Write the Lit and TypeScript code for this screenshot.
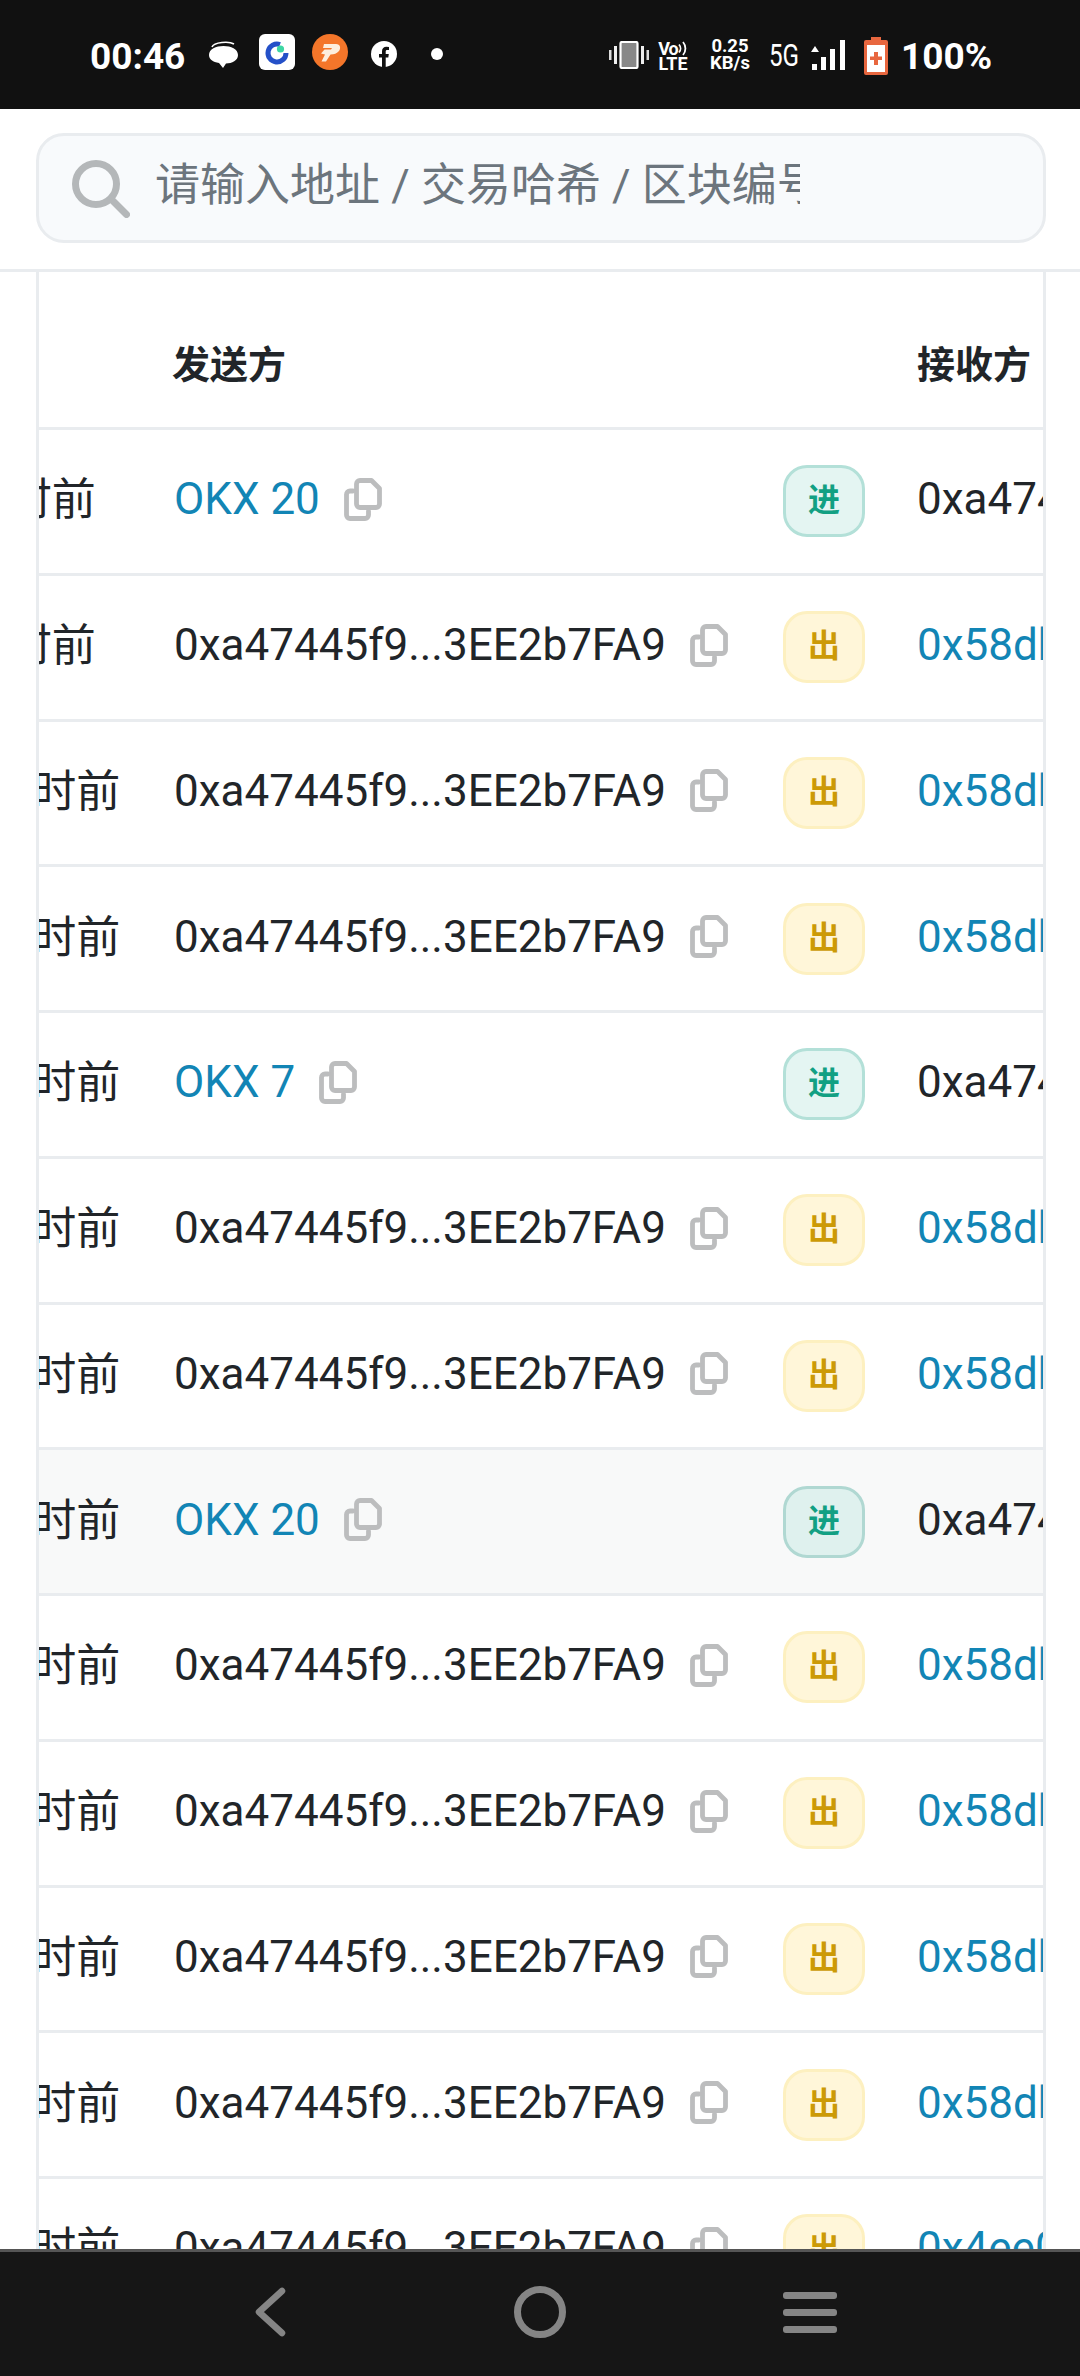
import { LitElement, html, css, svg } from "lit";
import { customElement } from "lit/decorators.js";

type Row = { age: string; from: string; fromLink?: boolean; dir: "in" | "out"; to: string; toLink?: boolean; hl?: boolean };
const ADDR = "0xa47445f9...3EE2b7FA9";
const inRow = (age: string, from: string, hl = false): Row => ({ age, from, fromLink: true, dir: "in", to: "0xa47445f9...3EE2b7FA9", hl });
const outRow = (age: string, to = "0x58dbA21c...7F1e20B4"): Row => ({ age, from: ADDR, dir: "out", to, toLink: true });

const ROWS: Row[] = [
  inRow("9 小时前", "OKX 20"),
  outRow("9 小时前"),
  outRow("10 小时前"),
  outRow("10 小时前"),
  inRow("10 小时前", "OKX 7"),
  outRow("10 小时前"),
  outRow("10 小时前"),
  inRow("10 小时前", "OKX 20", true),
  outRow("10 小时前"),
  outRow("10 小时前"),
  outRow("10 小时前"),
  outRow("10 小时前"),
  outRow("10 小时前", "0x4ee07c3d...91aB5D02"),
];

const copyIcon = svg`<svg class="copy" viewBox="0 0 38 43" width="38" height="43" fill="none" stroke="#bcbdbe" stroke-width="4.8" stroke-linejoin="round" stroke-linecap="round">
  <path d="M16 2.5H27.5L35.5 10.5V26A3.5 3.5 0 0 1 32 29.5H16A3.5 3.5 0 0 1 12.5 26V6A3.5 3.5 0 0 1 16 2.5Z"/>
  <path d="M9 13H6A3.5 3.5 0 0 0 2.5 16.5V37A3.5 3.5 0 0 0 6 40.5H21A3.5 3.5 0 0 0 24.5 37V33"/>
</svg>`;

@customElement("app-root")
export class AppRoot extends LitElement {
  static styles = css`
    :host { display: block; width: 1080px; height: 2376px; font-family: Roboto, "Noto Sans CJK SC", sans-serif; }
    .page { width: 1080px; height: 2376px; display: flex; flex-direction: column; overflow: hidden; background: #fff; }

    .status { height: 109px; flex: none; background: #111; color: #fff; display: flex; align-items: center; padding: 3px 0 0 90px; box-sizing: border-box; }
    .time { font-size: 37px; font-weight: 700; width: 93px; margin-right: 26px; line-height: 1; }
    .status svg { flex: none; display: block; }
    .m-msg { margin-right: 21px; margin-top: -3px; }
    .m-g { margin-right: 17px; margin-top: -9px; }
    .m-p { margin-right: 23px; margin-top: -9px; }
    .m-f { margin-right: 34px; margin-top: -5px; }
    .m-dot { margin-right: 166px; margin-top: -5px; }
    .m-vib { margin-right: 10px; margin-top: -3px; }
    .volte { width: 28px; margin-right: 21px; font-size: 18px; font-weight: 700; line-height: 15px; display: flex; flex-direction: column; align-items: center; }
    .vo { display: flex; align-items: center; letter-spacing: -1px; }
    .speed { width: 44px; margin-right: 17px; font-size: 18.5px; font-weight: 700; line-height: 17px; text-align: center; margin-top: -3px; white-space: nowrap; }
    .fiveg { width: 31px; margin-right: 11px; font-size: 31px; font-weight: 400; line-height: 1; transform: scaleX(0.78); transform-origin: left center; white-space: nowrap; margin-top: -2px; }
    .m-sig { margin-right: 19px; margin-top: -2px; }
    .m-bat { margin-right: 13px; }
    .pct { font-size: 37px; font-weight: 700; line-height: 1; }

    .searchbar { flex: none; height: 163px; box-sizing: border-box; padding: 24px 34px 0 36px; border-bottom: 3px solid #e9ecef; }
    .box { height: 110px; box-sizing: border-box; background: #f8fafc; border: 3px solid #e9ecef; border-radius: 28px; display: flex; align-items: center; padding-left: 33px; }
    .box svg { flex: none; margin-right: 25px; margin-top: 2px; }
    .ph { width: 645px; overflow: hidden; white-space: nowrap; font-size: 45px; color: #6c757d; line-height: 60px; margin-top: -4px; }

    .tablewrap { flex: 1; min-height: 0; margin: 0 34px 0 36px; border-left: 3px solid #e9ecef; border-right: 3px solid #e9ecef; overflow: hidden; }
    .table { margin-left: -111px; width: 1400px; }
    .row { display: flex; align-items: center; height: 145.75px; box-sizing: border-box; border-bottom: 3px solid #e9ecef; font-size: 44px; color: #212529; }
    .row.hl { background: #f8f9f9; }
    .row.head { height: 158px; padding-top: 28px; font-size: 38px; font-weight: 700; }
    .age { flex: none; width: 246px; white-space: nowrap; margin-top: -10px; }
    .from { flex: none; width: 609px; display: flex; align-items: center; gap: 24px; white-space: nowrap; }
    .from span, .to { margin-top: -4px; }
    .head .from span { margin-left: -2px; }
    .copy { flex: none; margin-top: -4px; }
    .dircell { flex: none; width: 134px; }
    .badge { width: 82px; height: 72px; box-sizing: border-box; border-radius: 24px; border: 3px solid; display: flex; align-items: center; justify-content: center; font-size: 32px; font-weight: 700; padding-bottom: 8px; }
    .badge.in { background: #e4f5f2; border-color: #b3e0d8; color: #12a083; }
    .hl .badge.in { background: #dff1ee; border-color: #b0d8d2; }
    .badge.out { background: #fff6d9; border-color: #fdf0c0; color: #cc9a06; }
    .to { white-space: nowrap; }
    .link { color: #1285b5; }

    .nav { flex: none; height: 127px; box-sizing: border-box; background: #161616; border-top: 3px solid #555; display: grid; grid-template-columns: repeat(3, 270px); padding: 0 135px 4px; align-items: center; justify-items: center; }
    .nav svg { display: block; }
  `;

  private statusBar() {
    return html`<div class="status">
      <div class="time">00:46</div>
      <svg class="m-msg" width="29" height="27" viewBox="0 0 29 27"><path d="M3 6C5 1 20 0 25 3" stroke="#fff" stroke-width="1.6" fill="none"/><path d="M14.5 5C22 5 29 8 29 14C29 19.500 23 22.500 17 22.500L14 27L10 22C4 21 0 18.500 0 14C0 8 7 5 14.500 5Z" fill="#fff"/></svg>
      <svg class="m-g" width="36" height="36" viewBox="0 0 36 36"><rect width="36" height="36" rx="6" fill="#fff"/><path d="M21 10.5A9 9 0 1 0 27 19" fill="none" stroke="#2450c8" stroke-width="5"/><circle cx="21.5" cy="15" r="3.6" fill="#3ed6a4"/></svg>
      <svg class="m-p" width="36" height="36" viewBox="0 0 36 36"><circle cx="18" cy="18" r="18" fill="#f4762a"/><path d="M12 10H24C28.500 10 29 14.500 27 17C25 19.500 22 20.500 18.500 20.500L14 27.500H9.500L13 20.500L9 19.500L12.500 15.500H19L20 14L11 14Z" fill="#fdeedd"/></svg>
      <svg class="m-f" width="26" height="26" viewBox="0 0 26 26"><circle cx="13" cy="13" r="13" fill="#fff"/><path d="M11 26V16.500H8V13H11V10.300C11 7.300 12.800 5.700 15.400 5.700L18 5.900V9H16.300C15 9 14.700 9.700 14.700 10.600V13H17.800L17.300 16.500H14.700V26Z" fill="#111"/></svg>
      <svg class="m-dot" width="12" height="12" viewBox="0 0 12 12"><circle cx="6" cy="6" r="6" fill="#fff"/></svg>
      <svg class="m-vib" width="40" height="28" viewBox="0 0 40 28"><rect x="0" y="9" width="2.500" height="10" fill="#ddd"/><rect x="5" y="5" width="3" height="18" fill="#eee"/><rect x="32" y="5" width="3" height="18" fill="#eee"/><rect x="37.500" y="9" width="2.500" height="10" fill="#ddd"/><rect x="11.500" y="1" width="17" height="26" rx="1.500" fill="#888" stroke="#fff" stroke-width="2.200"/></svg>
      <div class="volte"><div class="vo">Vo<svg width="10" height="15" viewBox="0 0 10 15" fill="none" stroke="#fff" stroke-width="1.800"><path d="M1 3.500A6 6 0 0 1 1 11.500"/><path d="M5 1A10 10 0 0 1 5 14"/></svg></div><div>LTE</div></div>
      <div class="speed">0.25<br />KB/s</div>
      <div class="fiveg">5G</div>
      <svg class="m-sig" width="34" height="30" viewBox="0 0 34 30" fill="#fff"><path d="M0 12L4 6L8 12Z"/><rect x="1" y="24" width="5" height="6"/><rect x="10" y="17" width="5" height="13"/><rect x="19" y="9" width="5" height="21"/><rect x="29" y="0" width="5" height="30"/></svg>
      <svg class="m-bat" width="24" height="38" viewBox="0 0 24 38"><path d="M7 0H17V3H22A2 2 0 0 1 24 5V36A2 2 0 0 1 22 38H2A2 2 0 0 1 0 36V5A2 2 0 0 1 2 3H7Z" fill="#e8673f"/><rect x="3" y="8" width="18" height="27" fill="#fff"/><path d="M10 15H14V19.500H18V23H14V28H10V23H6V19.500H10Z" fill="#e8673f"/></svg>
      <div class="pct">100%</div>
    </div>`;
  }

  private searchBar() {
    return html`<div class="searchbar"><div class="box">
      <svg width="58" height="58" viewBox="0 0 58 58" fill="none" stroke="#b4b7b9" stroke-width="7" stroke-linecap="round"><circle cx="24" cy="24" r="20.500"/><path d="M39 39L54.500 54.500"/></svg>
      <div class="ph">请输入地址 / 交易哈希 / 区块编号</div>
    </div></div>`;
  }

  private row(r: Row) {
    return html`<div class="row ${r.hl ? "hl" : ""}">
      <div class="age">${r.age}</div>
      <div class="from"><span class=${r.fromLink ? "link" : ""}>${r.from}</span>${copyIcon}</div>
      <div class="dircell"><div class="badge ${r.dir}">${r.dir === "in" ? "进" : "出"}</div></div>
      <div class="to ${r.toLink ? "link" : ""}">${r.to}</div>
    </div>`;
  }

  render() {
    return html`<div class="page">
      ${this.statusBar()}
      ${this.searchBar()}
      <div class="tablewrap"><div class="table">
        <div class="row head">
          <div class="age">时间</div>
          <div class="from"><span>发送方</span></div>
          <div class="dircell"></div>
          <div class="to">接收方</div>
        </div>
        ${ROWS.map((r) => this.row(r))}
      </div></div>
      <div class="nav">
        <svg width="32" height="50" viewBox="0 0 32 50" fill="none" stroke="#858585" stroke-width="6.500" stroke-linecap="round" stroke-linejoin="round"><path d="M28 4L5 25L28 46"/></svg>
        <svg width="52" height="52" viewBox="0 0 52 52" fill="none" stroke="#858585" stroke-width="7"><circle cx="26" cy="26" r="22.500"/></svg>
        <svg width="54" height="41" viewBox="0 0 54 41" fill="#858585"><rect width="54" height="7" rx="3"/><rect y="17" width="54" height="7" rx="3"/><rect y="34" width="54" height="7" rx="3"/></svg>
      </div>
    </div>`;
  }
}
